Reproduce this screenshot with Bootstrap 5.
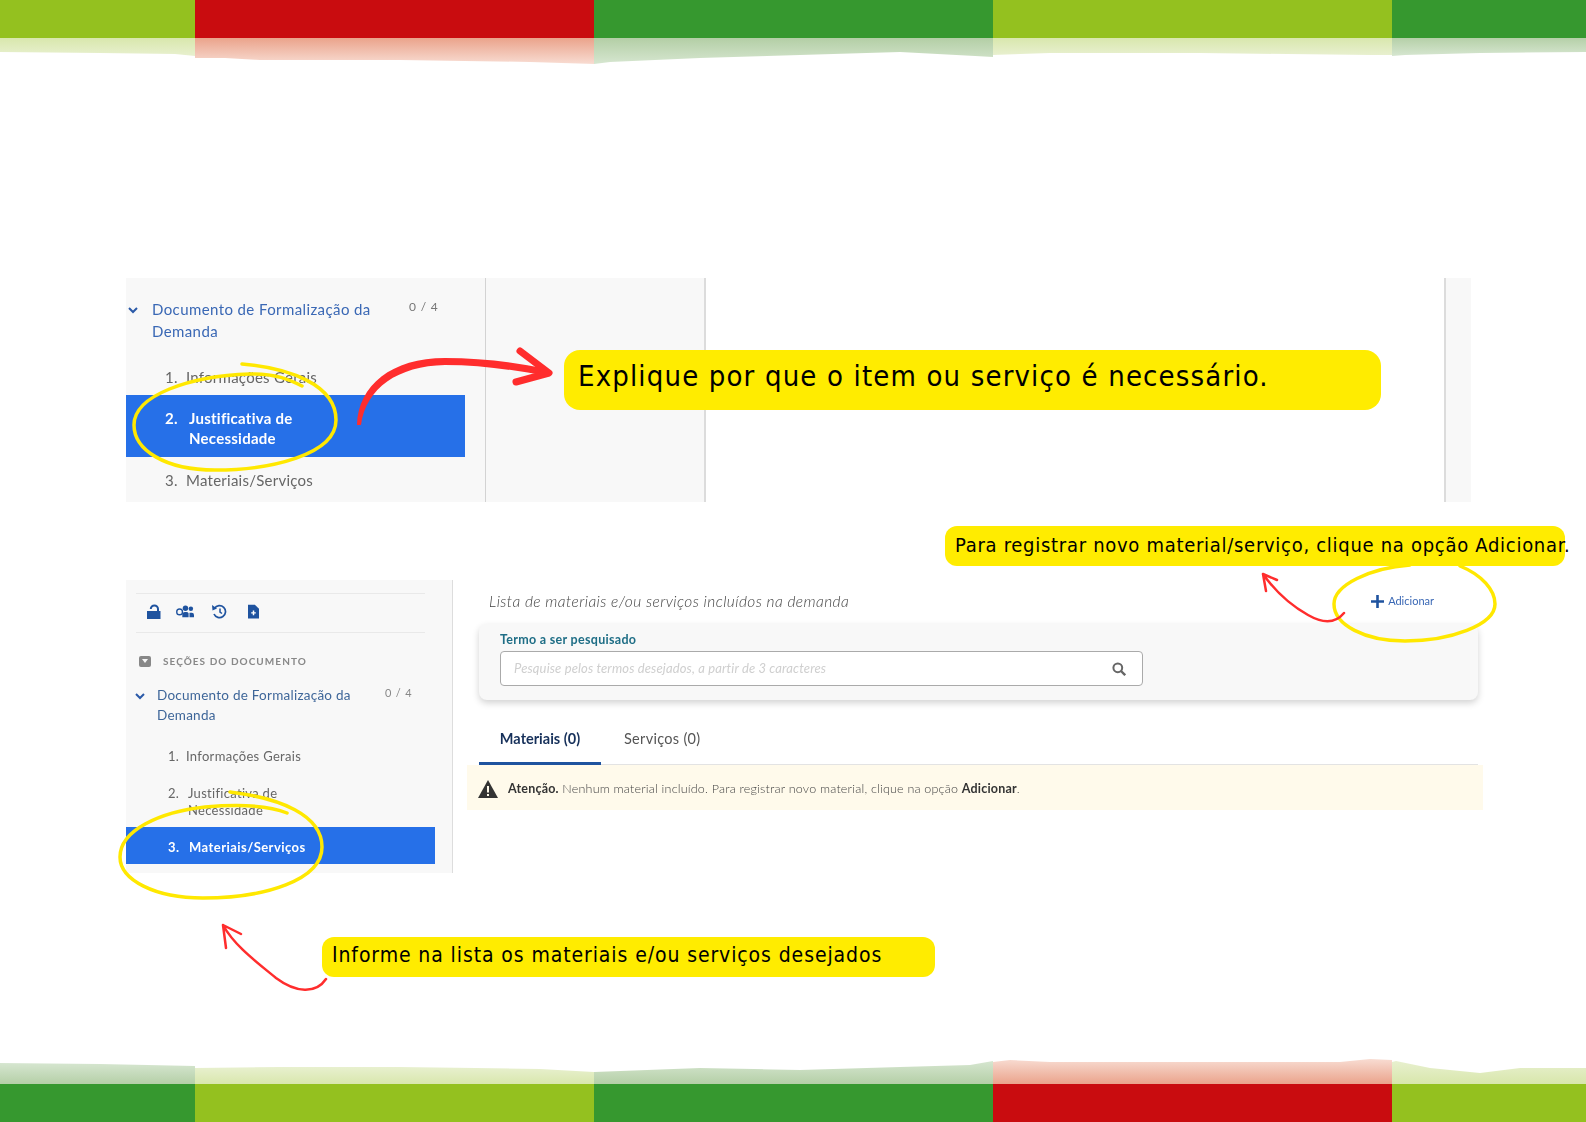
<!DOCTYPE html>
<html lang="pt-BR">
<head>
<meta charset="UTF-8">
<meta name="viewport" content="width=device-width, initial-scale=1.0">
<title>Justificativa de Necessidade</title>
<link href="https://cdn.jsdelivr.net/npm/bootstrap@5.3.3/dist/css/bootstrap.min.css" rel="stylesheet">
<style>
body { width: 1586px; height: 1122px; overflow: hidden; background: #fff; font-family: Lato, "Open Sans", sans-serif; position: relative; }
.page-wrap { height: 1122px; }
.seg-lime { background: #94c11f; }
.seg-red { background: #c90c0f; }
.seg-green { background: #36982f; }
.band-solid { height: 38px; }
.band-solid > div:nth-child(1) { width: 195px; }
.band-solid > div:nth-child(2), .band-solid > div:nth-child(3), .band-solid > div:nth-child(4) { width: 399px; }
.band-solid > div:nth-child(5) { width: 194px; }
.band-fade { display: block; width: 1586px; height: 28px; }
.band-fade g { filter: blur(.7px); }

.shot-one { margin: 212px 0 0 126px; width: 1345px; height: 224px; overflow: hidden; background: #f8f8f8; filter: blur(.35px); }
.one-side { width: 360px; padding-top: 20px; border-right: 1px solid #d3d3d3; }
.one-mid { width: 220px; border-right: 2px solid #dcdcdc; }
.one-blank { width: 740px; background: #fff; border-right: 2px solid #dcdcdc; }
.doc-head { color: #3a68b5; font-size: 15px; letter-spacing: .4px; line-height: 22px; width: 236px; margin-left: 26px; }
.doc-count { color: #777; font-size: 12px; letter-spacing: .8px; margin-left: 21px; line-height: 18px; }
.doc-chev { position: absolute; left: 2px; top: 8px; }
.doc-row { position: relative; }
.step { color: #666; font-size: 15px; letter-spacing: .25px; line-height: 22px; display: flex; }
.one-side .step { padding-left: 39px; margin-top: 24px; }
.one-side .step .num { width: 21px; }
.one-side .step-on { width: 339px; background: #2670e8; color: #fff; font-weight: 700; line-height: 20px; margin-top: 7px; padding-top: 13px; padding-bottom: 9px; padding-left: 39px; }
.one-side .step-on .num { width: 24px; }
.one-side .step-last { margin-top: 12px; }

.call-out { background: #ffec00; color: #000; font-family: "DejaVu Sans", sans-serif; font-stretch: condensed; white-space: nowrap; border-radius: 12px; position: relative; z-index: 2; }
.call-big { position: absolute; left: 564px; top: 350px; width: 817px; height: 60px; font-size: 29px; letter-spacing: 1.15px; padding: 5px 14px; border-radius: 16px; }
.call-add { width: 620px; height: 40px; margin: 24px 21px 14px auto; font-size: 20px; letter-spacing: .71px; line-height: 38px; padding-left: 10px; }
.call-list { width: 613px; height: 40px; margin: 64px 0 0 322px; font-size: 21px; letter-spacing: .9px; line-height: 36px; padding-left: 10px; }

.shot-two { margin-left: 126px; width: 1357px; height: 293px; filter: blur(.35px); }
.two-side { width: 327px; height: 293px; background: #f8f8f8; border-right: 1px solid #ddd; }
.tool-row { margin: 13px 0 0 10px; width: 289px; height: 40px; border-top: 1px solid #e9e9e9; border-bottom: 1px solid #e9e9e9; padding: 0 0 4px 10px; gap: 15px; }
.tool-row svg:nth-child(3) { margin-left: 2px; }
.tool-row svg:nth-child(4) { margin-left: 6px; }
.sect-lbl { margin: 20px 0 0 13px; color: #888; font-size: 10px; font-weight: 700; letter-spacing: 1.05px; line-height: 16px; gap: 12px; }
.sect-box { width: 12px; height: 11px; background: #888; border-radius: 2px; display: flex; align-items: center; justify-content: center; }
.two-side .doc-row { margin-top: 16px; }
.two-side .doc-head { color: #3e6699; font-size: 13.5px; letter-spacing: .25px; line-height: 20px; width: 214px; margin-left: 31px; }
.two-side .doc-count { margin-left: 14px; font-size: 11px; line-height: 16px; color: #888; }
.two-side .doc-chev { left: 9px; top: 7px; }
.two-side .step { font-size: 13px; padding-left: 42px; line-height: 17px; letter-spacing: .3px; }
.two-side .step .num { width: 18px; flex: none; }
.two-side .step-a { margin-top: 23px; }
.two-side .step-b { margin-top: 20px; width: 200px; }
.two-side .step-b .num { width: 20px; }
.two-side .step-on { margin-top: 8px; width: 309px; height: 37px; padding-top: 3px; background: #2670e8; color: #fff; font-weight: 700; align-items: center; letter-spacing: .45px; }
.two-side .step-on .num { width: 21px; }
.two-main { width: 1030px; padding-left: 26px; }
.list-title { padding: 11px 49px 0 10px; font-size: 15.5px; letter-spacing: .42px; font-style: italic; font-weight: 300; color: #444; line-height: 20px; }
.add-link { color: #3a68b5; font-size: 11px; letter-spacing: 0; font-style: normal; font-weight: 400; gap: 4px; }
.find-card { margin-top: 13px; width: 999px; height: 76px; padding: 9px 335px 14px 21px; background: #f8f8f8; border-radius: 8px; box-shadow: 0 3px 7px rgba(0,0,0,.18); }
.find-lbl { color: #1f6e86; font-size: 12.5px; letter-spacing: .3px; font-weight: 700; line-height: 14px; margin-bottom: 4px; }
.find-box { height: 35px; border: 1px solid #aaa; border-radius: 4px; background: #fff; padding: 0 16px 0 13px; color: #cfcfcf; font-size: 13px; letter-spacing: .14px; font-style: italic; }
.tab-row { margin-top: 21px; width: 999px; height: 44px; border-bottom: 1px solid #e3e3e3; }
.tab-row .nav-link { padding: 8px 0 0; height: 44px; font-size: 14.5px; color: #555; text-align: center; line-height: 20px; }
.tab-row .nav-link.active { width: 122px; color: #16305a; font-weight: 700; border-bottom: 3px solid #1f539f; background: none; }
.tab-row .nav-link.tab-off { margin-left: 23px; letter-spacing: .3px; }
.warn-bar { margin: 0 0 0 -12px; width: 1016px; height: 45px; padding: 3px 0 0 11px; border: 0; border-radius: 0; background: #fffaeb; color: #444; font-size: 12.5px; letter-spacing: .2px; font-weight: 300; gap: 10px; }
.warn-bar b { color: #333; font-weight: 700; }
.mark-layer { position: absolute; left: 0; top: 0; width: 1586px; height: 1122px; z-index: 1; pointer-events: none; }
</style>
</head>
<body>
<div class="page-wrap d-flex flex-column">

  <!-- top band -->
  <div class="band-solid d-flex">
    <div class="seg-lime"></div><div class="seg-red"></div><div class="seg-green"></div><div class="seg-lime"></div><div class="seg-green"></div>
  </div>
  <svg class="band-fade" viewBox="0 38 1586 28">
    <defs>
      <linearGradient id="fl" x1="0" y1="0" x2="0" y2="1"><stop offset="0" stop-color="#d5e5a5"/><stop offset="1" stop-color="#e8f0cf"/></linearGradient>
      <linearGradient id="fr" x1="0" y1="0" x2="0" y2="1"><stop offset="0" stop-color="#e89a80"/><stop offset="1" stop-color="#f8dcd2"/></linearGradient>
      <linearGradient id="fg" x1="0" y1="0" x2="0" y2="1"><stop offset="0" stop-color="#aecb9f"/><stop offset="1" stop-color="#d6e6d0"/></linearGradient>
    </defs>
    <g>
    <path fill="url(#fl)" d="M0 34H195V56L175 54 100 53 0 52Z"/>
    <path fill="url(#fr)" d="M195 34H594V64L530 62 400 60 260 60 225 58 195 58Z"/>
    <path fill="url(#fg)" d="M594 34H993V57L975 56 900 52 800 55 700 58 610 62 594 64Z"/>
    <path fill="url(#fl)" d="M993 34H1392V55L1370 55 1200 53 1050 53 993 55Z"/>
    <path fill="url(#fg)" d="M1392 34H1586V52L1480 53 1405 55 1392 56Z"/>
    </g>
  </svg>

  <!-- first screenshot -->
  <div class="shot-one d-flex">
    <div class="one-side">
      <div class="doc-row d-flex">
        <svg class="doc-chev" width="10" height="8" viewBox="0 0 10 8"><path d="M1 2l4 4 4-4" fill="none" stroke="#2b5aa8" stroke-width="2"/></svg>
        <div class="doc-head">Documento de Formalização da Demanda</div>
        <div class="doc-count">0 / 4</div>
      </div>
      <div class="step"><span class="num">1.</span><span>Informações Gerais</span></div>
      <div class="step step-on"><span class="num">2.</span><span>Justificativa de<br>Necessidade</span></div>
      <div class="step step-last"><span class="num">3.</span><span>Materiais/Serviços</span></div>
    </div>
    <div class="one-mid"></div>
    <div class="one-blank"></div>
  </div>

  <div class="call-out call-add">Para registrar novo material/serviço, clique na opção Adicionar.</div>

  <!-- second screenshot -->
  <div class="shot-two d-flex">
    <div class="two-side">
      <div class="tool-row d-flex align-items-center">
        <svg width="15" height="15" viewBox="0 0 15 15"><path fill="#1f539f" d="M1 7h10V5a2.600 2.600 0 0 0-5.200 0h-2a4.600 4.600 0 0 1 9.200 0v2h1.500v8H1z"/></svg>
        <svg width="18" height="14" viewBox="0 0 20 14"><circle cx="4" cy="8" r="3.200" fill="none" stroke="#1f539f" stroke-width="1.500"/><circle cx="10.500" cy="4" r="3" fill="#1f539f"/><circle cx="16.500" cy="4.500" r="2.500" fill="#1f539f"/><path fill="#1f539f" d="M7 14v-3a3 3 0 0 1 3-3h1.500a3 3 0 0 1 2.500 1.500V14zM15 9h2.500a2.500 2.500 0 0 1 2.500 2.500V14h-5z"/></svg>
        <svg width="16" height="15" viewBox="0 0 16 15"><path d="M3.500 4.300A6 6 0 1 1 3 10" fill="none" stroke="#1f539f" stroke-width="1.700"/><path fill="#1f539f" d="M1 1l5 3.500-4.500 2z"/><path d="M9 4.500v3.500l2 1.500" fill="none" stroke="#1f539f" stroke-width="1.500"/></svg>
        <svg width="11" height="15" viewBox="0 0 12 15"><path fill="#1f539f" d="M0 0h7.500L12 4.500V15H0z"/><path d="M6 6.500v5M3.500 9h5" stroke="#fff" stroke-width="1.600"/></svg>
      </div>
      <div class="sect-lbl d-flex align-items-center"><span class="sect-box"><svg width="6" height="4" viewBox="0 0 6 4"><path d="M0 0h6L3 4z" fill="#f7f7f7"/></svg></span>SEÇÕES DO DOCUMENTO</div>
      <div class="doc-row d-flex">
        <svg class="doc-chev" width="10" height="8" viewBox="0 0 10 8"><path d="M1 2l4 4 4-4" fill="none" stroke="#2b5aa8" stroke-width="2"/></svg>
        <div class="doc-head">Documento de Formalização da Demanda</div>
        <div class="doc-count">0 / 4</div>
      </div>
      <div class="step step-a"><span class="num">1.</span><span>Informações Gerais</span></div>
      <div class="step step-b"><span class="num">2.</span><span>Justificativa de<br>Necessidade</span></div>
      <div class="step step-on"><span class="num">3.</span><span>Materiais/Serviços</span></div>
    </div>
    <div class="two-main">
      <div class="list-title d-flex justify-content-between align-items-center">
        <span>Lista de materiais e/ou serviços incluídos na demanda</span>
        <span class="add-link d-flex align-items-center"><svg width="13" height="13" viewBox="0 0 13 13"><path d="M6.500 0v13M0 6.500h13" stroke="#1f539f" stroke-width="2.600"/></svg>Adicionar</span>
      </div>
      <div class="find-card">
        <div class="find-lbl">Termo a ser pesquisado</div>
        <div class="find-box d-flex align-items-center justify-content-between">
          <span>Pesquise pelos termos desejados, a partir de 3 caracteres</span>
          <svg width="14" height="14" viewBox="0 0 14 14"><circle cx="5.800" cy="5.800" r="4.400" fill="none" stroke="#666" stroke-width="2"/><path d="M9 9l4.200 4.200" stroke="#666" stroke-width="2.400"/></svg>
        </div>
      </div>
      <ul class="nav tab-row">
        <li class="nav-item"><a class="nav-link active" href="#">Materiais (0)</a></li>
        <li class="nav-item"><a class="nav-link tab-off" href="#">Serviços (0)</a></li>
      </ul>
      <div class="alert warn-bar d-flex align-items-center mb-0" role="alert">
        <svg width="20" height="18" viewBox="0 0 20 18"><path fill="#333" d="M10 0l10 18H0z"/><path d="M10 6v6.500M10 14v2" stroke="#fffaeb" stroke-width="2"/></svg>
        <span><b>Atenção.</b> Nenhum material incluído. Para registrar novo material, clique na opção <b>Adicionar</b>.</span>
      </div>
    </div>
  </div>

  <div class="call-out call-list">Informe na lista os materiais e/ou serviços desejados</div>

  <!-- bottom band -->
  <svg class="band-fade mt-auto" viewBox="0 1056 1586 28">
    <defs>
      <linearGradient id="bl" x1="0" y1="1" x2="0" y2="0"><stop offset="0" stop-color="#d5e5a5"/><stop offset="1" stop-color="#e8f0cf"/></linearGradient>
      <linearGradient id="br" x1="0" y1="1" x2="0" y2="0"><stop offset="0" stop-color="#e89a80"/><stop offset="1" stop-color="#f8dcd2"/></linearGradient>
      <linearGradient id="bg" x1="0" y1="1" x2="0" y2="0"><stop offset="0" stop-color="#aecb9f"/><stop offset="1" stop-color="#d6e6d0"/></linearGradient>
    </defs>
    <g>
    <path fill="url(#bg)" d="M0 1088H195V1066L100 1064 0 1063Z"/>
    <path fill="url(#bl)" d="M195 1088H594V1072L540 1069 400 1067 280 1067 195 1068Z"/>
    <path fill="url(#bg)" d="M594 1088H993V1061L970 1065 900 1067 800 1070 700 1068 594 1072Z"/>
    <path fill="url(#br)" d="M993 1088H1392V1060L1370 1059 1340 1062 1050 1062 1010 1060 993 1062Z"/>
    <path fill="url(#bl)" d="M1392 1088H1586V1068L1520 1068 1480 1073 1430 1068 1396 1061 1392 1062Z"/>
    </g>
  </svg>
  <div class="band-solid d-flex">
    <div class="seg-green"></div><div class="seg-lime"></div><div class="seg-green"></div><div class="seg-red"></div><div class="seg-lime"></div>
  </div>
</div>

<div class="call-out call-big">Explique por que o item ou serviço é necessário.</div>

<!-- hand drawn marks over the screenshots -->
<svg class="mark-layer" viewBox="0 0 1586 1122">
  <g fill="none" stroke="#ffe800" stroke-width="3.500" stroke-linecap="round">
    <path d="M242 364C290 368 336 385 336 420C336 455 270 470 215 470C165 470 134 450 134 425C134 395 190 376 250 374C275 373 290 380 302 386"/>
    <path d="M230 792C280 798 322 815 322 847C322 880 265 898 203 898C155 898 120 880 120 857C120 830 160 812 205 807C240 804 270 806 287 813"/>
    <path d="M1460 566C1482 575 1495 590 1495 604C1495 625 1450 641 1405 641C1365 641 1334 625 1334 604C1334 585 1370 568 1410 565"/>
  </g>
  <path fill="#ff2d2d" d="M357 425C358 385 392 358 445 358C480 358 515 362 546 369L547 376C515 370 480 365 445 365C398 366 366 388 361 425Z"/>
  <g fill="none" stroke="#ff2d2d" stroke-linecap="round" stroke-linejoin="round">
    <path stroke-width="7" d="M520 351L549 373L516 382"/>
    <path stroke-width="2.500" d="M1344 613C1335 624 1322 623 1308 615C1292 606 1275 591 1263 574M1263 574L1277 580M1263 574L1266 591"/>
    <path stroke-width="2.500" d="M326 979C316 994 296 993 276 978C254 960 234 945 223 925M223 925L241 934M223 925L226 948"/>
  </g>
</svg>

<script src="https://cdn.jsdelivr.net/npm/bootstrap@5.3.3/dist/js/bootstrap.bundle.min.js"></script>
</body>
</html>
